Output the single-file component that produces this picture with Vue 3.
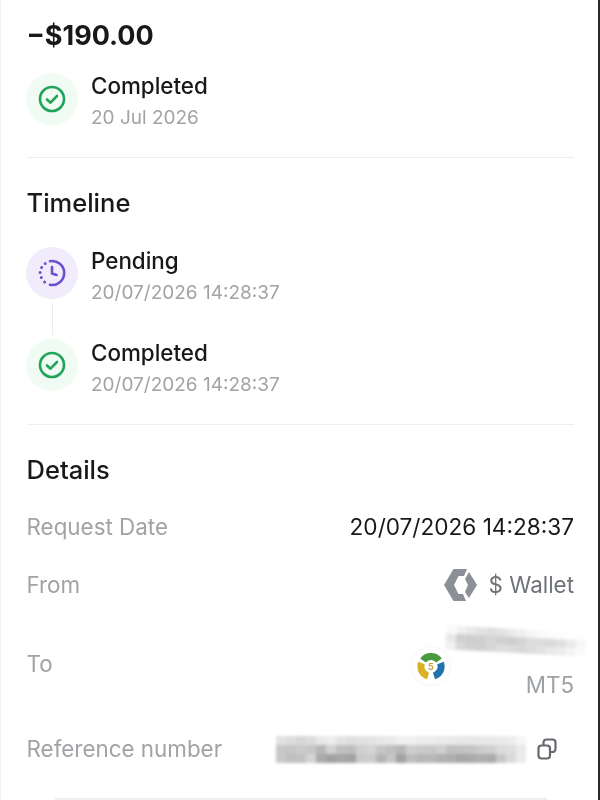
<script setup>
const timeline = [
  { label: 'Pending', time: '20/07/2026 14:28:37', kind: 'pending' },
  { label: 'Completed', time: '20/07/2026 14:28:37', kind: 'done' },
]
// The reference number is pixelated in the source, so it is drawn as a mosaic of grey cells.
const refShades = [
  [226, 220, 214, 220, 232, 236, 228, 222, 226, 226, 232, 234, 240, 240, 236, 236, 234, 234, 232, 232, 232, 232, 234, 236, 246],
  [200, 198, 202, 198, 184, 210, 192, 190, 208, 212, 198, 192, 184, 206, 202, 200, 208, 192, 194, 196, 204, 208, 220, 222, 234],
  [200, 192, 194, 212, 170, 160, 166, 162, 202, 204, 180, 198, 162, 190, 182, 184, 176, 174, 166, 170, 174, 170, 200, 218, 236],
]
const refCells = refShades.flat().map((v) => `rgb(${v},${v},${v})`)
const toShades = [
  [250, 240, 232, 226, 222, 226, 234, 240, 246, 250, 252, 252, 254, 254],
  [232, 208, 206, 208, 214, 208, 206, 212, 220, 220, 218, 224, 234, 246],
  [240, 216, 210, 208, 214, 222, 220, 216, 220, 226, 232, 236, 244, 250],
]
const toCells = toShades.flat().map((v) => `rgb(${v},${v},${v})`)
</script>

<template>
  <main class="page">
    <section class="summary">
      <h1 class="amount">−$190.00</h1>
      <div class="event">
        <span class="badge done">
          <svg viewBox="0 0 28 28" width="28" height="28" fill="none" stroke="#22a35a" stroke-width="2.6" stroke-linecap="round" stroke-linejoin="round">
            <circle cx="14" cy="14" r="12" />
            <path d="M9 14.500l3.500 3.200L19 11" />
          </svg>
        </span>
        <div class="event-text">
          <div class="event-title">Completed</div>
          <div class="event-sub">20 Jul 2026</div>
        </div>
      </div>
    </section>

    <section class="block timeline">
      <h2 class="heading">Timeline</h2>
      <div class="steps">
        <template v-for="(step, i) in timeline" :key="step.kind">
          <div v-if="i > 0" class="connector"></div>
          <div class="event">
            <span class="badge" :class="step.kind">
              <svg v-if="step.kind === 'pending'" viewBox="0 0 28 28" width="28" height="28" fill="none" stroke="#6d4fd0" stroke-width="2.600" stroke-linecap="round" stroke-linejoin="round">
                <path d="M12 2.200a12 12 0 1 1 0 23.600" />
                <path d="M14 8v6.500l4.500 1.500" />
                <path d="M7.200 4.400h.01M3.600 8.400h.01M2.100 13.400h.01M3.300 18.600h.01M6.600 23h.01" stroke-width="3" />
              </svg>
              <svg v-else viewBox="0 0 28 28" width="28" height="28" fill="none" stroke="#22a35a" stroke-width="2.600" stroke-linecap="round" stroke-linejoin="round">
                <circle cx="14" cy="14" r="12" />
                <path d="M9 14.500l3.500 3.200L19 11" />
              </svg>
            </span>
            <div class="event-text">
              <div class="event-title">{{ step.label }}</div>
              <div class="event-sub">{{ step.time }}</div>
            </div>
          </div>
        </template>
      </div>
    </section>

    <section class="block details">
      <h2 class="heading">Details</h2>
      <div class="row row-date">
        <span class="key">Request Date</span>
        <span class="val-dark">20/07/2026 14:28:37</span>
      </div>
      <div class="row row-from">
        <span class="key">From</span>
        <span class="val-wallet">
          <svg viewBox="0 0 33 32" width="33" height="32">
            <path fill="#8b9097" d="M9.500 0H23l-3 7h-5.500L10 16l4.500 9H19l3 7H9.500L0 16z" />
            <path fill="#8b9097" d="M25 3l8 13-8 13-4-6 3-7-3-6z" />
          </svg>
          <span>$ Wallet</span>
        </span>
      </div>
      <div class="row row-to">
        <span class="key">To</span>
        <div class="to-value">
          <span class="mt5">
            <svg viewBox="0 0 28 28" width="28" height="28">
              <g fill="none" stroke-width="7">
                <path stroke="#4c9a3f" d="M6 8.500a10 10 0 0 1 16 0" />
                <path stroke="#d8b124" d="M4.500 11a10 10 0 0 0 6.500 13" />
                <path stroke="#1f73ad" d="M23.500 11a10 10 0 0 1-6.500 13" />
              </g>
              <circle cx="14" cy="14.500" r="6" fill="#fff" />
              <text x="14" y="18" text-anchor="middle" class="mt5-num">5</text>
            </svg>
          </span>
          <div class="to-text">
            <div class="mosaic mosaic-to">
              <span v-for="(c, i) in toCells" :key="i" :style="{ background: c }"></span>
            </div>
            <div class="to-type">MT5</div>
          </div>
        </div>
      </div>
      <div class="row row-ref">
        <span class="key">Reference number</span>
        <div class="ref-value">
          <div class="mosaic mosaic-ref">
            <span v-for="(c, i) in refCells" :key="i" :style="{ background: c }"></span>
          </div>
          <svg class="copy" viewBox="0 0 20 22" width="20" height="22" fill="none" stroke="#66696e" stroke-width="2.200" stroke-linejoin="round">
            <rect x="1.500" y="7.500" width="11.500" height="13" rx="3" />
            <path d="M6.500 7.500V4.500a3 3 0 0 1 3-3H15.500a3 3 0 0 1 3 3V11a3 3 0 0 1-3 3H13" />
          </svg>
        </div>
      </div>
    </section>
    <div class="peek"></div>
  </main>
</template>

<style>
html, body { margin: 0; background: #fff; }
</style>

<style scoped>
.page {
  position: relative;
  box-sizing: border-box;
  width: 600px;
  height: 800px;
  overflow: hidden;
  padding: 0 24px 0 25.500px;
  background: #fff;
  font-family: Inter, "Liberation Sans", sans-serif;
  color: #17181a;
  display: flex;
  flex-direction: column;
  border-left: 1px solid #f2f2f2;
  border-right: 2px solid #2a2a2a;
  filter: blur(0.3px);
}
.summary { padding: 18px 0 26px; border-bottom: 1px solid #eeeeee; }
.amount { margin: 0 0 19px; font-size: 27px; line-height: 36px; font-weight: 700; }
.event { display: flex; align-items: flex-start; gap: 13px; }
.badge { width: 52px; height: 52px; margin-left: -0.500px; flex: none; border-radius: 50%; display: flex; align-items: center; justify-content: center; }
.badge.done { background: #effbf3; }
.badge.pending { background: #f0ecfc; }
.event-text { display: flex; flex-direction: column; gap: 6px; }
.steps .event-text { padding-top: 1px; }
.event-title { font-size: 22.400px; line-height: 26px; font-weight: 450; }
.event-sub { font-size: 19px; line-height: 26px; color: #a1a3a6; }
.block { padding-top: 30px; }
.heading { margin: 0; font-size: 25.500px; line-height: 30px; font-weight: 450; }
.timeline { padding-bottom: 26px; border-bottom: 1px solid #eeeeee; }
.steps { padding-top: 29px; display: flex; flex-direction: column; }
.connector { width: 1px; height: 32px; margin: -3px 0 4px 25.500px; background: #ececec; }
.row { display: flex; justify-content: space-between; align-items: center; }
.key { font-size: 22.400px; line-height: 28px; color: #a1a3a6; }
.row-date { margin-top: 28px; }
.val-dark { font-size: 22.600px; line-height: 28px; color: #17181a; }
.row-from { margin-top: 28px; }
.val-wallet { display: flex; align-items: center; gap: 12px; font-size: 22.400px; line-height: 32px; color: #6f7277; }
.row-to { margin-top: 28px; }
.to-value { display: flex; align-items: flex-end; }
.mt5 { width: 38px; height: 38px; margin: 0 0 14px; border-radius: 50%; background: #fff; box-shadow: 0 0 3px #ececec; display: flex; align-items: center; justify-content: center; }
.mt5-num { font-size: 9px; font-weight: 700; fill: #c9a23a; }
.to-text { width: 124px; display: flex; flex-direction: column; align-items: flex-end; gap: 18px; }
.mosaic { display: grid; filter: blur(1.500px); }
.mosaic-to { grid-template-columns: repeat(14, 10px); grid-auto-rows: 8px; margin-right: -12px; transform: rotate(3deg); }
.mosaic-ref { grid-template-columns: repeat(25, 10px); grid-auto-rows: 9px; }
.to-type { font-size: 22.400px; line-height: 28px; color: #9ea1a4; }
.row-ref { margin-top: 36px; }
.ref-value { display: flex; align-items: center; gap: 11px; padding-right: 17px; }
.copy { flex: none; }
.peek { position: absolute; left: 54px; width: 492px; bottom: 0; height: 2px; background: #eeeeee; }
</style>
